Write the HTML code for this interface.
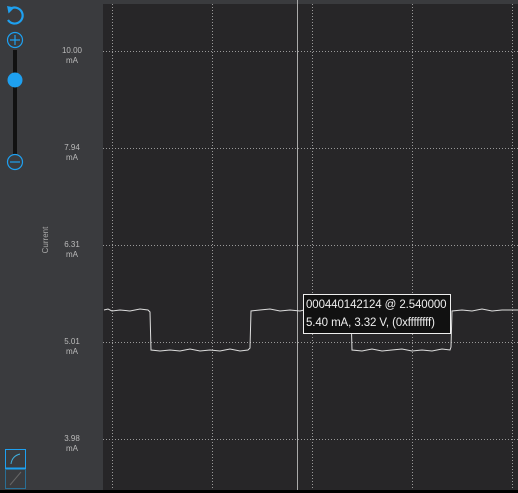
<!DOCTYPE html>
<html><head><style>
body{margin:0;width:518px;height:493px;background:#000;overflow:hidden;font-family:"Liberation Sans",sans-serif;position:relative}
#left{position:absolute;left:0;top:0;width:103px;height:490px;background:#3a3b3e}
#top{position:absolute;left:103px;top:0;width:415px;height:4px;background:#3a3b3e}
#chart{position:absolute;left:103px;top:4px;width:415px;height:486px;background:#272628}
.lbl{position:absolute;left:52px;width:40px;text-align:center;color:#bbb;font-size:8px;line-height:10px}
.tip{position:absolute;left:303px;top:294px;width:148px;height:40px;background:#111;border:1px solid #eee;color:#eee;font-size:11.5px;line-height:18px;padding-left:2px;padding-top:1px;box-sizing:border-box;white-space:nowrap;letter-spacing:-0.1px}
</style></head><body>
<div id="left"></div><div id="top"></div><div id="chart"></div>
<svg style="position:absolute;left:0;top:0" width="518" height="493">
<g stroke="#999" stroke-width="1" stroke-dasharray="1,2">
<line x1="112.5" y1="4" x2="112.5" y2="490"/><line x1="212.5" y1="4" x2="212.5" y2="490"/><line x1="312.5" y1="4" x2="312.5" y2="490"/><line x1="412.5" y1="4" x2="412.5" y2="490"/><line x1="512.5" y1="4" x2="512.5" y2="490"/>
<line x1="103" y1="51.5" x2="518" y2="51.5"/><line x1="103" y1="148.5" x2="518" y2="148.5"/><line x1="103" y1="245.5" x2="518" y2="245.5"/><line x1="103" y1="342.5" x2="518" y2="342.5"/><line x1="103" y1="439.5" x2="518" y2="439.5"/>
</g>
<line x1="297.5" y1="0" x2="297.5" y2="490" stroke="#aaa"/>
<polyline fill="none" stroke="#ddd" stroke-width="1" points="104,310 108,309 112,311 120,310 130,311 140,309 148,310 150,312 151,350 160,351 170,350 180,351 190,349 200,351 210,350 220,351 230,349 240,351 248,350 250,348 251,311 260,310 270,309 280,311 290,310 300,311 304,310 310,311 320,311 330,310 340,311 349,310 351,312 352,350 362,351 372,349 382,351 392,350 402,349 412,351 422,350 432,351 442,349 450,350 451,347 452,311 462,310 472,311 482,309 492,311 502,310 518,310"/>
<path d="M12 8 A8 8 0 1 1 8 20" fill="none" stroke="#1ea0f0" stroke-width="2.2"/>
<path d="M8 7 L13 8 L9 12 Z" fill="#1ea0f0" stroke="#1ea0f0" stroke-width="1.5"/>
<line x1="15" y1="50" x2="15" y2="154" stroke="#111" stroke-width="4"/>
<circle cx="15" cy="40" r="7.5" fill="#3a3b3e" stroke="#1ea0f0" stroke-width="1.2"/>
<path d="M10 40 H20 M15 35 V45" stroke="#1ea0f0" stroke-width="1.2"/>
<circle cx="15" cy="162" r="7.5" fill="#3a3b3e" stroke="#1ea0f0" stroke-width="1.2"/>
<path d="M10 162 H20" stroke="#1ea0f0" stroke-width="1.2"/>
<circle cx="15" cy="80" r="7.5" fill="#1ea0f0"/>
<rect x="5.5" y="449.5" width="20" height="19" fill="none" stroke="#1ea0f0"/>
<line x1="5" y1="468.5" x2="26" y2="468.5" stroke="#1ea0f0" stroke-width="2"/>
<rect x="5.5" y="469.5" width="20" height="19" fill="none" stroke="#2a6f95"/>
<path d="M11 464 Q12 456 20 454" fill="none" stroke="#3fb0e0"/>
<line x1="10" y1="485" x2="21" y2="472" stroke="#666"/>
<text x="48" y="240" fill="#aaa" font-size="8" transform="rotate(-90 48 240)" text-anchor="middle" font-family="Liberation Sans">Current</text>
</svg>
<div class="lbl" style="top:46px">10.00<br>mA</div>
<div class="lbl" style="top:143px">7.94<br>mA</div>
<div class="lbl" style="top:240px">6.31<br>mA</div>
<div class="lbl" style="top:337px">5.01<br>mA</div>
<div class="lbl" style="top:434px">3.98<br>mA</div>
<div class="tip">000440142124 @ 2.540000<br>5.40 mA, 3.32 V, (0xffffffff)</div>
</body></html>
